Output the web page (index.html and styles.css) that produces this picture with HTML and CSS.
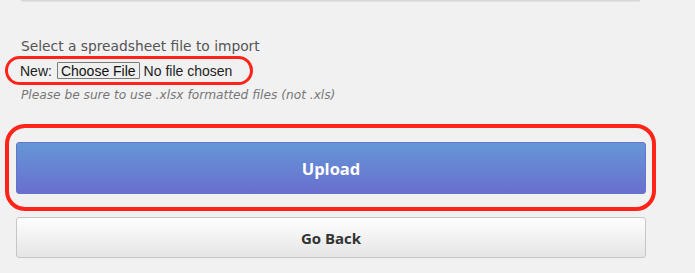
FILE: index.html
```html
<!DOCTYPE html>
<html lang="en">
<head>
  <meta charset="UTF-8">
  <meta name="viewport" content="width=device-width, initial-scale=1.0">
  <title>Import spreadsheet</title>
  <link rel="stylesheet" href="styles.css">
</head>
<body>
  <div class="page">
    <div class="panel-edge"></div>

    <form class="import">
      <p class="label">Select a spreadsheet file to import</p>
      <div class="file-row">
        <span>New:</span>
        <input type="file" name="file" accept=".xlsx">
      </div>
      <p class="hint">Please be sure to use .xlsx formatted files (not .xls)</p>

      <div class="actions">
        <button type="submit" class="btn btn-primary">Upload</button>
        <button type="button" class="btn btn-default">Go Back</button>
      </div>
    </form>

    <!-- annotations drawn over the form -->
    <div class="mark mark-file"></div>
    <div class="mark mark-upload"></div>
  </div>
</body>
</html>
```

FILE: styles.css
```css
body {
  margin: 0;
  background: #f1f1f1;
  font-family: 'Open Sans', 'DejaVu Sans', sans-serif;
  color: #555;
}

.page {
  position: relative;
  height: 273px;
  overflow: hidden;
}

.panel-edge {
  margin-left: 21px;
  width: 619px;
  height: 1px;
  background: #d7d7d7;
  box-shadow: 0 1px 1px rgba(0, 0, 0, 0.06);
}

.import {
  padding: 35px 49px 0 16px;
}

.label {
  margin: 0 0 0 5px;
  font-family: 'DejaVu Sans', sans-serif;
  font-size: 13.8px;
  line-height: 20px;
  color: #555;
}

.file-row {
  display: flex;
  align-items: center;
  gap: 5px;
  margin: 6px 0 0 4px;
  font-family: 'Liberation Sans', Arial, sans-serif;
  font-size: 14px;
  color: #222;
}

.file-row input {
  font-family: 'Liberation Sans', Arial, sans-serif;
  font-size: 14px;
  color: #222;
}

.file-row input::file-selector-button {
  font-family: 'Liberation Sans', Arial, sans-serif;
  font-size: 14px;
  color: #111;
  height: 17px;
  padding: 0 3px;
  margin-right: 4px;
  background: #efefef;
  border: 1px solid #7a7a7a;
  border-radius: 1px;
}

.hint {
  margin: 8px 0 0 5px;
  font-family: 'DejaVu Sans', sans-serif;
  font-size: 12.2px;
  line-height: 17px;
  font-style: italic;
  color: #777;
}

.actions {
  display: flex;
  flex-direction: column;
  gap: 23px;
  margin-top: 38px;
}

.btn {
  display: block;
  width: 630px;
  font-family: 'Open Sans', 'DejaVu Sans', sans-serif;
  font-weight: 700;
  border-radius: 3px;
  cursor: pointer;
}

.btn-primary {
  height: 52px;
  font-size: 16.5px;
  color: #fff;
  background: linear-gradient(#6497d6, #6a6ecf);
  border: 1px solid #6474cc;
}

.btn-default {
  height: 41px;
  font-size: 15px;
  color: #333;
  background: linear-gradient(#fefefe, #e5e5e5);
  border: 1px solid #c6c6c6;
}

.mark {
  position: absolute;
  border: 3.5px solid #ff2419;
  box-sizing: border-box;
  pointer-events: none;
}

.mark-file {
  left: 5px;
  top: 56px;
  width: 248px;
  height: 29px;
  border-radius: 15px;
}

.mark-upload {
  left: 5px;
  top: 124px;
  width: 651px;
  height: 87px;
  border-width: 4px;
  border-radius: 20px;
}
```
